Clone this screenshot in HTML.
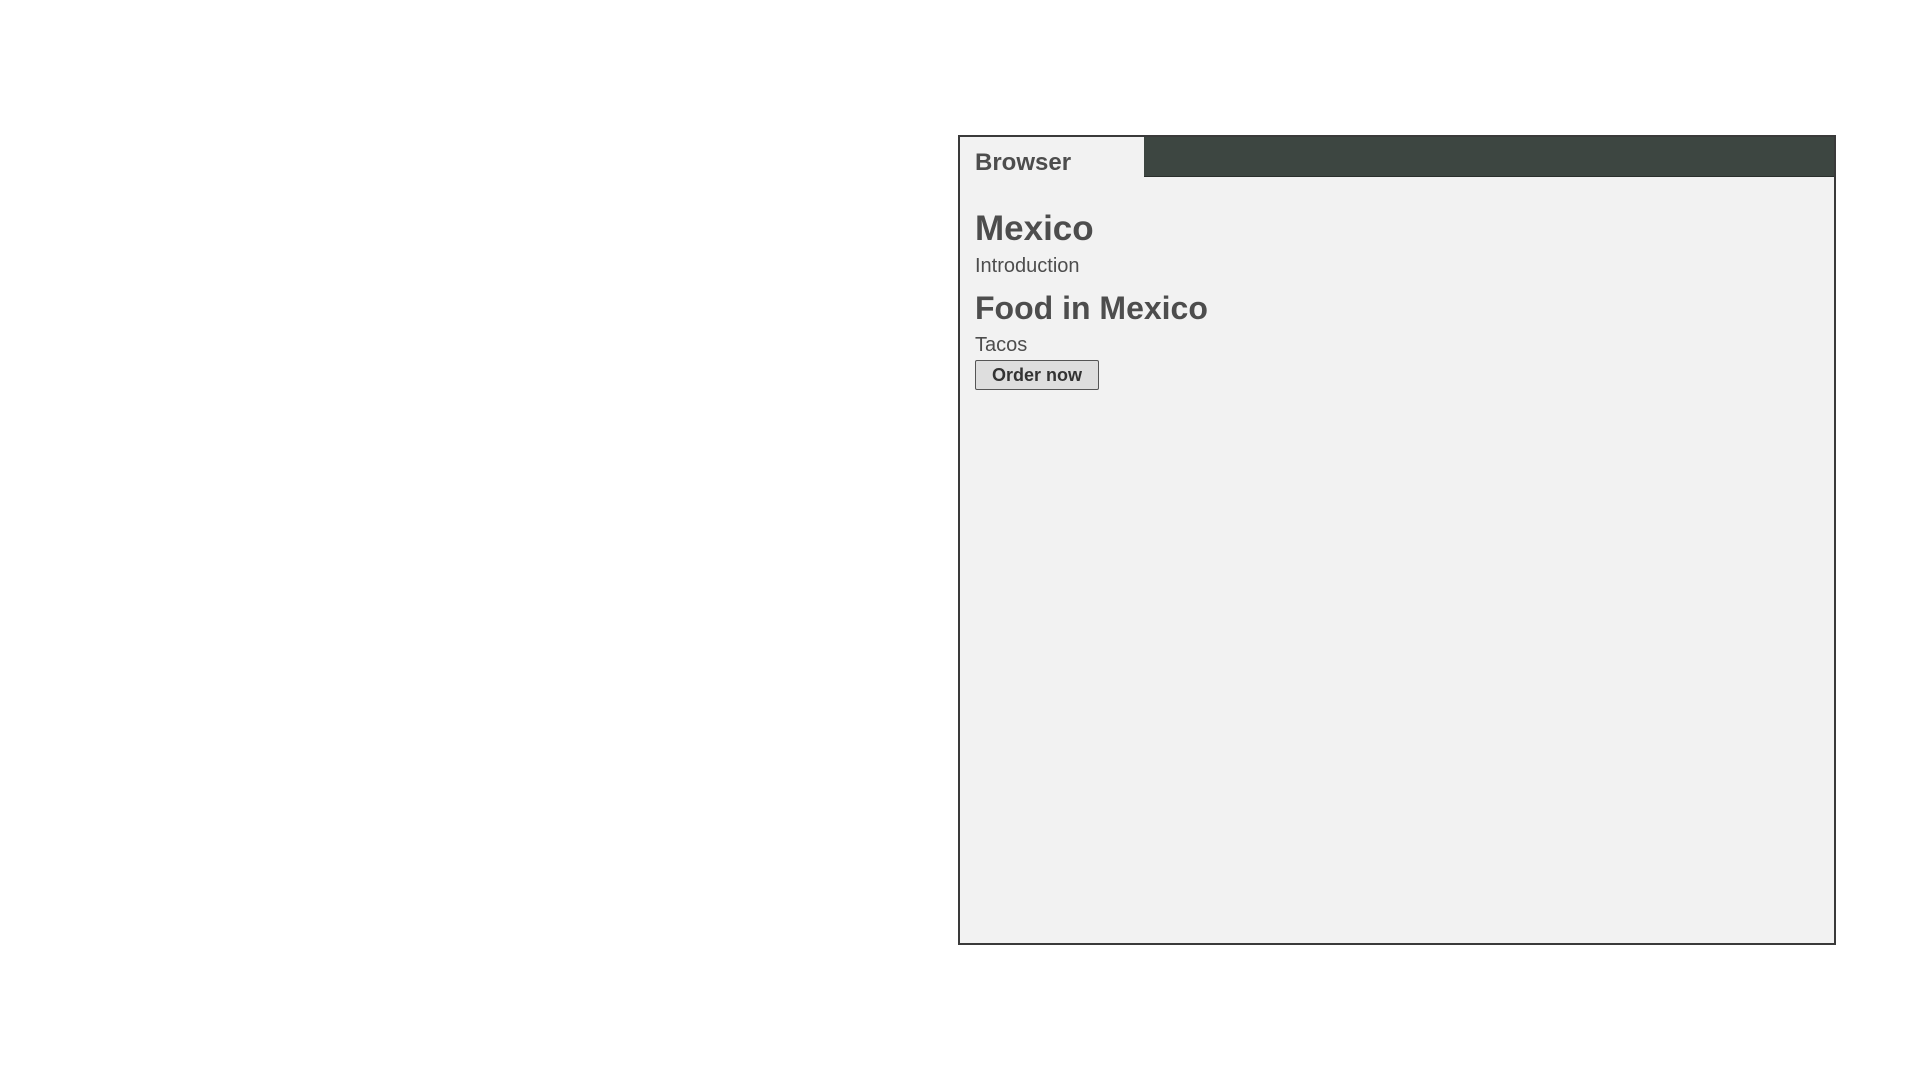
<!DOCTYPE html><html><head><style>
body{margin:0;width:1920px;height:1080px;background:#fff;position:relative;font-family:"Liberation Sans",sans-serif;color:#4d4d4d;overflow:hidden}
.box{position:absolute;left:958px;top:135px;width:874px;height:806px;border:2px solid #3a3a3a;background:#f2f2f2}
.bar{position:absolute;left:184px;top:0;right:0;height:39px;background:#3d4641;border-bottom:1px solid #2a2f2c}
.t{position:absolute;left:15px;white-space:nowrap;font-weight:bold}
</style></head><body>
<div class="box">
<div class="bar"></div>
<div class="t" style="top:12px;font-size:24px">Browser</div>
<div class="t" style="top:72px;font-size:35px">Mexico</div>
<div class="t" style="top:118px;font-size:20px;font-weight:normal">Introduction</div>
<div class="t" style="top:153px;font-size:32px">Food in Mexico</div>
<div class="t" style="top:197px;font-size:20px;font-weight:normal">Tacos</div>
<div style="position:absolute;left:15px;top:223px;width:124px;height:30px;border:1px solid #555;border-radius:2px;background:#dedede;box-sizing:border-box;font-size:18px;font-weight:bold;color:#333;text-align:center;line-height:28px">Order now</div>
</div>
</body></html>
